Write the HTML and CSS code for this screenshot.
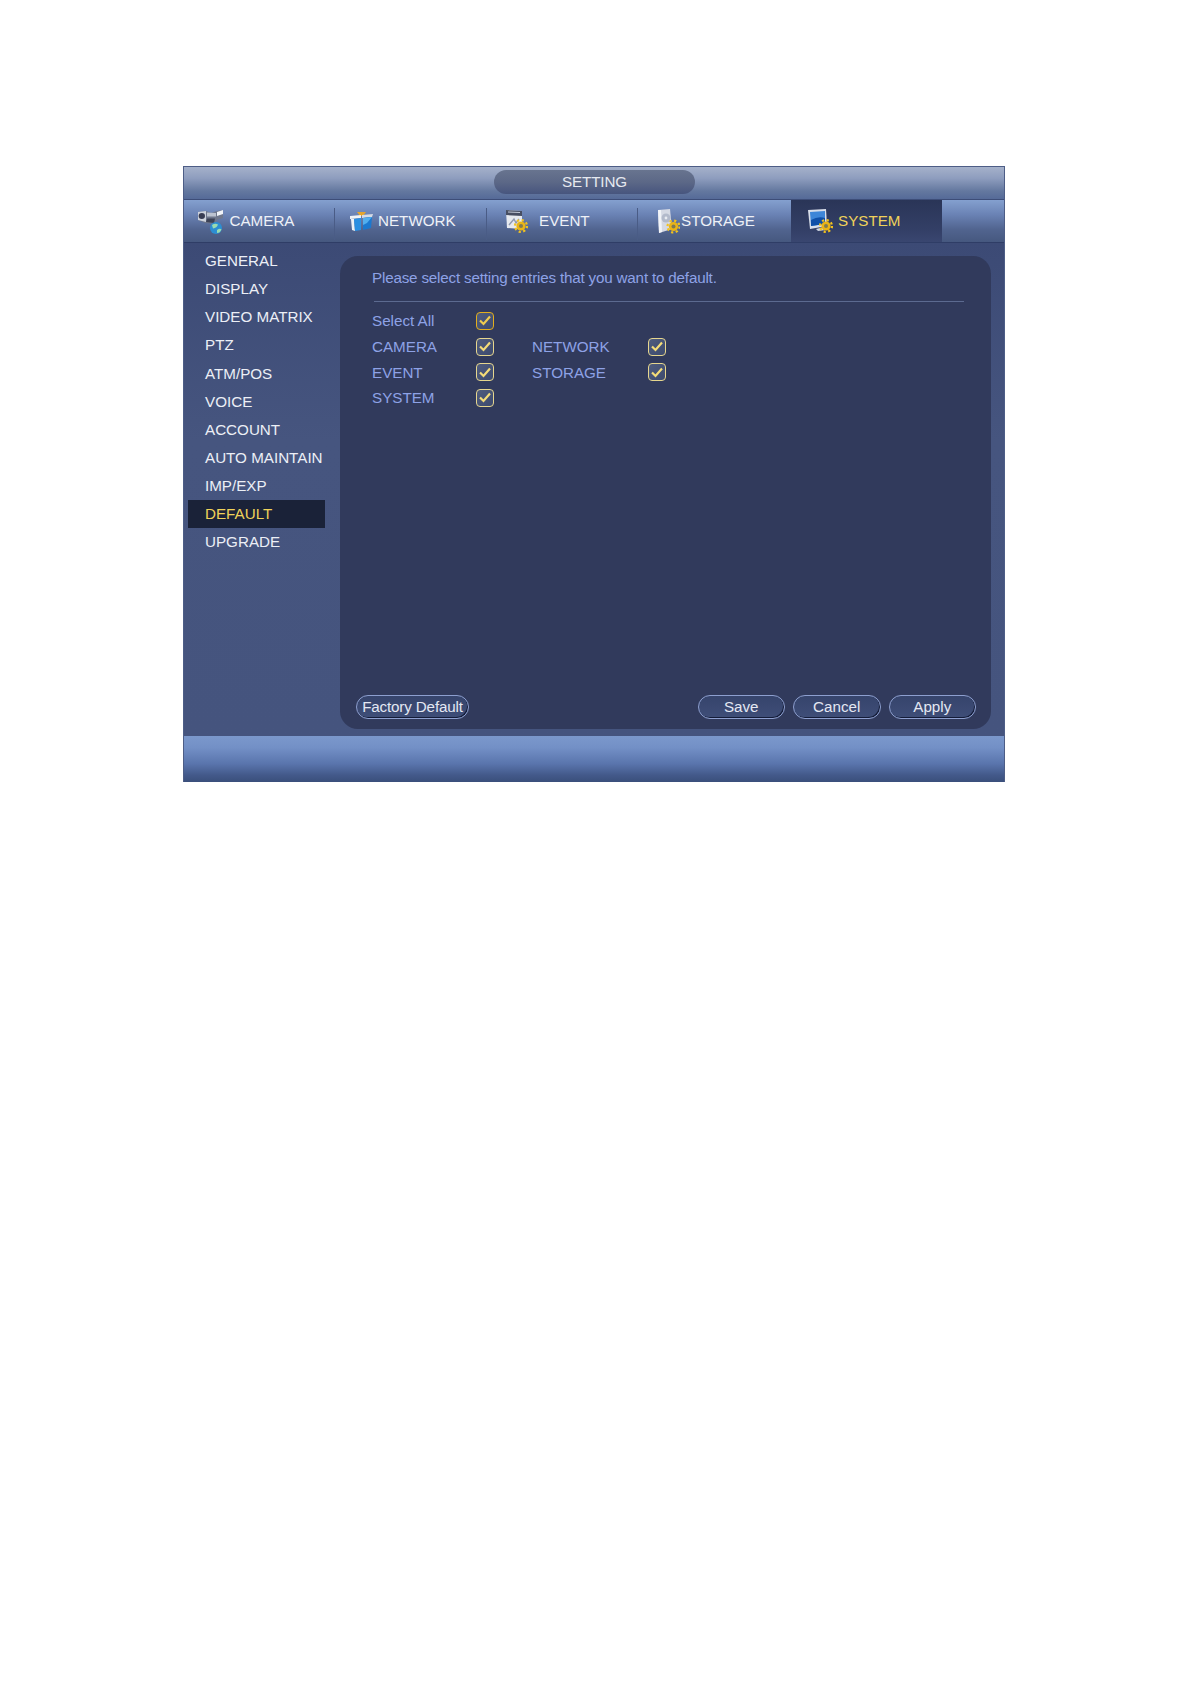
FILE: index.html
```html
<!DOCTYPE html>
<html lang="en">
<head>
  <meta charset="UTF-8">
  <meta name="viewport" content="width=device-width, initial-scale=1.0">
  <link rel="stylesheet" href="styles.css">
  <title>SETTING</title>
</head>
<body>
  <svg class="defs" width="0" height="0">
    <defs>
      <g id="gear">
        <circle r="4.6" fill="#eab416"/>
        <circle r="6" fill="none" stroke="#f2c21e" stroke-width="2.2" stroke-dasharray="2.2 2.5"/>
        <circle r="2" fill="#7f7a52"/>
      </g>
      <path id="tick" d="M1 5.5 L4.5 9 L11 1.5" fill="none" stroke-width="2.2"/>
    </defs>
  </svg>

  <div class="window">
    <div class="title-bar">
      <div class="title-pill">SETTING</div>
    </div>

    <div class="tabs">
      <div class="tab tab-camera">
        <svg class="tab-icon" width="27" height="25" viewBox="0 0 27 25">
          <path d="M1 3 L9 2 L14 4 L20 2 L26 1 L26 9 L20 11 L18 15 L8 14 L1 11 Z" fill="#6f778c"/>
          <path d="M1 3 L9 2 L9 13 L1 11 Z" fill="#cdd2dc"/>
          <ellipse cx="4.8" cy="7" rx="3.2" ry="3" fill="#383c52"/>
          <path d="M10 3.5 L19 4 L19 7.5 L10 7.5 Z" fill="#bcc3d0"/>
          <path d="M20 3 L26 1 L26 5 L20 7 Z" fill="#f0f3f8"/>
          <path d="M10 9.5 L18 9.5 L17 14 L9 13 Z" fill="#3d4256"/>
          <circle cx="19" cy="19" r="6" fill="#2c8ed2"/>
          <path d="M15 16 Q18 14 21 15.5 Q20 19 16 19.5 Z M20 21 Q23 19 24.5 20.5 Q23 24 20 24 Z" fill="#9adbb0"/>
        </svg>
        <span>CAMERA</span>
      </div>
      <div class="tab tab-network">
        <svg class="tab-icon" width="23" height="21" viewBox="0 0 23 21">
          <path d="M7 1 L16 1 L13 5 L10 5 Z" fill="#e5a52e"/>
          <path d="M0 5 L11 4 L11 7 L0 8 Z" fill="#eef1f5"/>
          <path d="M12 4 L23 3 L22 6 L12 7 Z" fill="#d5dbe5"/>
          <path d="M1 8 L4 8 L5 20 L2 19 Z" fill="#eef2f6"/>
          <path d="M4 8 L11 7 L11 19 L5 20 Z" fill="#2b90e2"/>
          <path d="M13 7 L22 6 L21 17 L13 19 Z" fill="#1b78cf"/>
          <path d="M13 7 L22 6 L17 12 L13 14 Z" fill="#52aeee"/>
        </svg>
        <span>NETWORK</span>
      </div>
      <div class="tab tab-event">
        <svg class="tab-icon" width="23" height="24" viewBox="0 0 23 24">
          <path d="M1 1 L17 2 L17 20 L2 19 Z" fill="#e6e9ef"/>
          <path d="M1 1 L17 2 L17 7 L1 6 Z" fill="#474e62"/>
          <path d="M3 3 L15 3.5" stroke="#c5cbd8" stroke-width="1"/>
          <path d="M4 16 L9 10 L11 14 L14 10" fill="none" stroke="#8f98b0" stroke-width="1.4"/>
          <use href="#gear" x="16" y="17"/>
        </svg>
        <span>EVENT</span>
      </div>
      <div class="tab tab-storage">
        <svg class="tab-icon" width="22" height="25" viewBox="0 0 22 25">
          <path d="M0 1 L12 0 L14 20 L1 24 Z" fill="#d5d9e4"/>
          <path d="M0 1 L3 1 L4 23 L1 24 Z" fill="#f2f4f8"/>
          <circle cx="8" cy="9" r="4.5" fill="#b3bacb"/>
          <circle cx="8" cy="9" r="1.4" fill="#e8ebf2"/>
          <use href="#gear" x="15.5" y="17.5"/>
        </svg>
        <span>STORAGE</span>
      </div>
      <div class="tab tab-system active">
        <svg class="tab-icon" width="25" height="24" viewBox="0 0 25 24">
          <path d="M0 1 L18 0 L19 17 L2 20 Z" fill="#d8deea"/>
          <path d="M2 3 L17 2 L17 15 L3 17 Z" fill="#3e86d8"/>
          <path d="M3 11 Q10 7 17 9 L17 15 L3 17 Z" fill="#0f4fa8"/>
          <path d="M8 20 L16 18 L18 21 L10 22 Z" fill="#cdd3e0"/>
          <use href="#gear" x="18" y="17"/>
        </svg>
        <span>SYSTEM</span>
      </div>
      <div class="tab-rest"></div>
    </div>

    <div class="content">
      <ul class="side-menu">
        <li>GENERAL</li>
        <li>DISPLAY</li>
        <li>VIDEO MATRIX</li>
        <li>PTZ</li>
        <li>ATM/POS</li>
        <li>VOICE</li>
        <li>ACCOUNT</li>
        <li>AUTO MAINTAIN</li>
        <li>IMP/EXP</li>
        <li class="selected">DEFAULT</li>
        <li>UPGRADE</li>
      </ul>

      <div class="panel">
        <p class="hint">Please select setting entries that you want to default.</p>
        <div class="divider"></div>

        <div class="options">
          <span class="opt-label">Select All</span>
          <span class="check focus"><svg width="12" height="11" viewBox="0 0 12 11"><use href="#tick"/></svg></span>
          <span></span><span></span>

          <span class="opt-label">CAMERA</span>
          <span class="check"><svg width="12" height="11" viewBox="0 0 12 11"><use href="#tick"/></svg></span>
          <span class="opt-label">NETWORK</span>
          <span class="check"><svg width="12" height="11" viewBox="0 0 12 11"><use href="#tick"/></svg></span>

          <span class="opt-label">EVENT</span>
          <span class="check"><svg width="12" height="11" viewBox="0 0 12 11"><use href="#tick"/></svg></span>
          <span class="opt-label">STORAGE</span>
          <span class="check"><svg width="12" height="11" viewBox="0 0 12 11"><use href="#tick"/></svg></span>

          <span class="opt-label">SYSTEM</span>
          <span class="check"><svg width="12" height="11" viewBox="0 0 12 11"><use href="#tick"/></svg></span>
          <span></span><span></span>
        </div>

        <div class="buttons">
          <button class="btn btn-factory">Factory Default</button>
          <div class="btn-group">
            <button class="btn">Save</button>
            <button class="btn">Cancel</button>
            <button class="btn">Apply</button>
          </div>
        </div>
      </div>
    </div>

    <div class="footer"></div>
  </div>
</body>
</html>
```

FILE: styles.css
```css
* {
  box-sizing: border-box;
}

body {
  margin: 0;
  min-height: 1684px;
  background-color: #fff;
  font-family: "Liberation Sans", Arial, sans-serif;
}

.defs {
  display: block;
  height: 0;
}

.window {
  width: 822px;
  margin: 166px 0 0 183px;
  border: 1px solid #4d5d86;
  border-bottom: none;
  display: flex;
  flex-direction: column;
  background-color: #43527c;
}

.title-bar {
  height: 33px;
  padding-top: 3px;
  display: flex;
  justify-content: center;
  border-bottom: 1px solid #3d4d78;
  background: linear-gradient(to bottom, #a5b1ca 0%, #8e9dbe 35%, #64789f 75%, #556a98 100%);
}

.title-pill {
  width: 201px;
  height: 24px;
  margin-left: 1px;
  border-radius: 12px;
  color: #e6e9f0;
  font-size: 15.2px;
  letter-spacing: -0.1px;
  line-height: 24px;
  text-align: center;
  background: linear-gradient(to bottom, #68748f, #5c6887 50%, #47557e);
}

.tabs {
  height: 43px;
  display: flex;
  border-bottom: 1px solid #2f3d66;
  background: linear-gradient(to bottom, #84a0cf 0%, #6a82b4 35%, #51648f 70%, #46587f 100%);
}

.tab {
  width: 152px;
  display: flex;
  align-items: center;
  color: #eef1f7;
  font-size: 15.2px;
  position: relative;
}

.tab span {
  position: relative;
  top: -1px;
}

.tab:not(.active):not(.tab-storage)::after {
  content: "";
  position: absolute;
  right: 0;
  top: 8px;
  bottom: 2px;
  width: 1px;
  background-color: #4a5c86;
}

.tab-camera {
  padding-left: 13px;
  width: 151px;
}

.tab-network {
  padding-left: 15px;
}

.tab-event {
  padding-left: 18px;
  width: 151px;
}

.tab-storage {
  padding-left: 20px;
  width: 153px;
}

.tab-system {
  padding-left: 17px;
  width: 151px;
}

.tab-camera .tab-icon {
  margin-right: 5.5px;
}

.tab-network .tab-icon {
  margin-right: 5px;
}

.tab-event .tab-icon {
  margin-right: 11px;
}

.tab-storage .tab-icon {
  margin-right: 1px;
}

.tab-system .tab-icon {
  margin-right: 5px;
}

.tab.active {
  color: #efd25a;
  background: linear-gradient(to bottom, #2a3557, #333f66 70%, #394670);
}

.tab-rest {
  flex: 1;
}

.content {
  height: 493px;
  display: flex;
  padding: 4px 13px 7px 4px;
  background: linear-gradient(to bottom, #3c4a75, #46557f 40%, #45547e);
}

.side-menu {
  width: 137px;
  margin: 0 15px 0 0;
  padding: 0;
  list-style: none;
}

.side-menu li {
  height: 28.15px;
  padding-left: 17px;
  color: #eceff6;
  font-size: 15.2px;
  line-height: 28px;
  white-space: nowrap;
}

.side-menu li.selected {
  color: #efd25a;
  background-color: #1a2238;
}

.panel {
  flex: 1;
  display: flex;
  flex-direction: column;
  margin-top: 9px;
  padding: 12px 15px 10px 32px;
  border-radius: 18px;
  background-color: #313a5c;
}

.hint {
  margin: 0;
  color: #8ea2e6;
  font-size: 15.2px;
  letter-spacing: -0.18px;
  line-height: 20px;
}

.divider {
  height: 1px;
  width: 590px;
  margin: 13px 0 6px 2px;
  background-color: #5c6a90;
}

.options {
  display: grid;
  grid-template-columns: 104px 56px 116px 18px;
  grid-auto-rows: 25.7px;
  align-items: center;
}

.opt-label {
  color: #8ea2e6;
  font-size: 15.2px;
  white-space: nowrap;
}

.check {
  width: 18px;
  height: 18px;
  display: flex;
  align-items: center;
  justify-content: center;
  border: 1.5px solid #e6d68e;
  border-radius: 4px;
  stroke: #f4dc78;
  background: linear-gradient(135deg, #4f5c7e, #3d4a6e);
}

.check.focus {
  border-color: #e3ae1c;
  stroke: #f0cc50;
}

.buttons {
  margin-top: auto;
  margin-left: -16px;
  display: flex;
  justify-content: space-between;
}

.btn-group {
  display: flex;
  gap: 8px;
}

.btn {
  width: 87.5px;
  height: 24px;
  padding: 0;
  border: 1.5px solid #8d9fcf;
  border-radius: 12px;
  color: #e3e7f2;
  font-family: inherit;
  font-size: 15.2px;
  line-height: 20px;
  background: linear-gradient(to bottom, #36446c, #3f4e78);
  box-shadow: inset -1px -1px 0 #141c38;
}

.btn-factory {
  width: 113px;
  letter-spacing: -0.15px;
}

.footer {
  height: 46px;
  background: linear-gradient(to bottom, #7b98cc 0%, #7390c6 25%, #5a75ad 60%, #43598a 85%, #3a4f7b 100%);
}
```
